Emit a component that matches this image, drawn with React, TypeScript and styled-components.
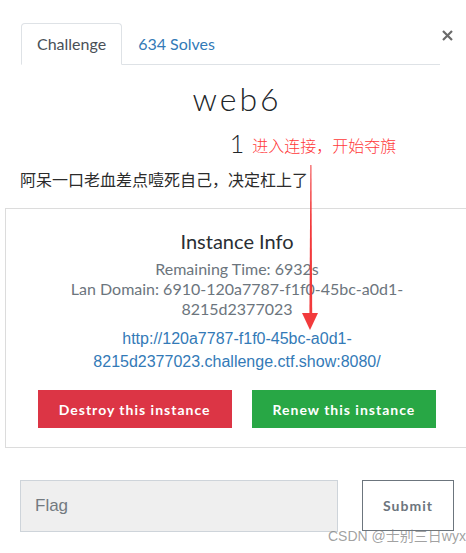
import React from "react";
import styled, { createGlobalStyle } from "styled-components";

const Global = createGlobalStyle`
  html, body { margin: 0; padding: 0; background: #fff; }
  body { font-family: Lato, "Noto Sans CJK SC", sans-serif; color: #212529; }
  * { box-sizing: border-box; }
`;

const Page = styled.div`
  position: relative;
  width: 466px;
  min-height: 553px;
  overflow: hidden;
  padding: 23px 12px 0 20px;
`;

const Header = styled.div`
  display: flex;
  align-items: flex-start;
`;

const Tabs = styled.div`
  flex: 1;
  display: flex;
  margin-left: 1px;
  border-bottom: 1px solid #dee2e6;
`;

const Tab = styled.div<{ $active?: boolean }>`
  padding: 8px 15px;
  line-height: 24px;
  font-size: 16px;
  margin-bottom: -1px;
  border: 1px solid ${(p) => (p.$active ? "#dee2e6" : "transparent")};
  border-bottom-color: ${(p) => (p.$active ? "#fff" : "transparent")};
  border-radius: 4px 4px 0 0;
  background: ${(p) => (p.$active ? "#fff" : "transparent")};
  color: ${(p) => (p.$active ? "#495057" : "#337ab7")};
`;

const Close = styled.div`
  width: 14px;
  display: flex;
  justify-content: center;
  margin-top: 7px;
`;

const Title = styled.h3`
  margin: 15px 0 0;
  text-align: center;
  font-size: 32px;
  line-height: 38px;
  font-weight: 300;
  letter-spacing: 3px;
  color: #212529;
`;

const ValueRow = styled.div`
  margin-top: 10px;
  display: flex;
  justify-content: center;
`;

const Value = styled.span`
  position: relative;
  font-size: 25px;
  line-height: 30px;
  font-weight: 300;
  color: #212529;
`;

const Annotation = styled.span`
  position: absolute;
  left: calc(100% + 8px);
  top: 5px;
  white-space: nowrap;
  font-family: "Noto Sans CJK SC", sans-serif;
  font-size: 16px;
  line-height: 24px;
  color: #ff3a3a;
`;

const Description = styled.p`
  margin: 9px 0 0;
  font-family: "Noto Sans CJK SC", sans-serif;
  font-size: 16px;
  line-height: 24px;
  color: #2b2b2b;
`;

const InstanceBox = styled.div`
  margin: 17px -15px 0;
  border: 1px solid #dcdcdc;
  padding: 20px 20px 19px;
  display: flex;
  flex-direction: column;
  align-items: center;
`;

const InstanceTitle = styled.h4`
  margin: 0 0 6px;
  font-size: 20px;
  line-height: 24px;
  font-weight: 400;
  color: #2a2e33;
`;

const Info = styled.p`
  margin: 0;
  max-width: 370px;
  text-align: center;
  font-size: 16px;
  line-height: 20px;
  color: #6c757d;
`;

const Link = styled.a`
  display: block;
  margin: 8px 0 0;
  max-width: 370px;
  text-align: center;
  font-family: "Liberation Sans", Arial, sans-serif;
  font-size: 16px;
  line-height: 23px;
  color: #337ab7;
  text-decoration: none;
`;

const ButtonRow = styled.div`
  margin-top: 17px;
  display: flex;
  gap: 20px;
`;

const ActionButton = styled.button<{ $variant: "danger" | "success" }>`
  height: 38px;
  padding: 0 21px;
  border: none;
  border-radius: 0;
  font-family: Lato, sans-serif;
  font-weight: 700;
  font-size: 14px;
  letter-spacing: 1px;
  color: #fff;
  background: ${(p) => (p.$variant === "danger" ? "#dc3545" : "#28a745")};
`;

const FlagRow = styled.div`
  margin-top: 32px;
  display: flex;
  gap: 24px;
`;

const FlagInput = styled.input`
  width: 318px;
  height: 52px;
  padding: 0 14px;
  border: 1px solid #ced4da;
  background: #efefef;
  font-family: "Liberation Sans", Arial, sans-serif;
  font-size: 17px;
  color: #495057;
  outline: none;
  &::placeholder { color: #737a80; }
`;

const SubmitButton = styled.button`
  width: 92px;
  height: 51px;
  border: 1px solid #6c757d;
  background: #fff;
  font-family: Lato, sans-serif;
  font-weight: 700;
  font-size: 14px;
  letter-spacing: 1px;
  color: #6c757d;
`;

const Watermark = styled.div`
  position: absolute;
  left: 328px;
  top: 527px;
  font-family: "Liberation Sans", "Noto Sans CJK SC", sans-serif;
  font-size: 14px;
  line-height: 18px;
  color: rgba(120, 120, 120, 0.7);
  white-space: nowrap;
`;

const Arrow = styled.svg`
  position: absolute;
  left: 300px;
  top: 163px;
`;

export default function App() {
  return (
    <>
      <Global />
      <Page>
        <Header>
          <Tabs>
            <Tab $active>Challenge</Tab>
            <Tab>634 Solves</Tab>
          </Tabs>
          <Close>
            <svg width="11" height="11" viewBox="0 0 11 11">
              <path d="M1 1L10 10M10 1L1 10" stroke="#6a6a6a" strokeWidth="2.2" strokeLinecap="butt" />
            </svg>
          </Close>
        </Header>
        <Title>web6</Title>
        <ValueRow>
          <Value>
            1<Annotation>进入连接，开始夺旗</Annotation>
          </Value>
        </ValueRow>
        <Description>阿呆一口老血差点噎死自己，决定杠上了</Description>
        <InstanceBox>
          <InstanceTitle>Instance Info</InstanceTitle>
          <Info>Remaining Time: 6932s</Info>
          <Info>Lan Domain: 6910-120a7787-f1f0-45bc-a0d1-8215d2377023</Info>
          <Link href="#">http://120a7787-f1f0-45bc-a0d1-8215d2377023.challenge.ctf.show:8080/</Link>
          <ButtonRow>
            <ActionButton $variant="danger">Destroy this instance</ActionButton>
            <ActionButton $variant="success">Renew this instance</ActionButton>
          </ButtonRow>
        </InstanceBox>
        <FlagRow>
          <FlagInput placeholder="Flag" />
          <SubmitButton>Submit</SubmitButton>
        </FlagRow>
        <Arrow width="20" height="170" viewBox="0 0 20 170">
          <polygon points="10.4,2 11.4,2 12.2,152 9.4,152" fill="#f23a3c" />
          <polygon points="2,150 18,150 10,167" fill="#f23a3c" />
        </Arrow>
        <Watermark>CSDN @士别三日wyx</Watermark>
      </Page>
    </>
  );
}
